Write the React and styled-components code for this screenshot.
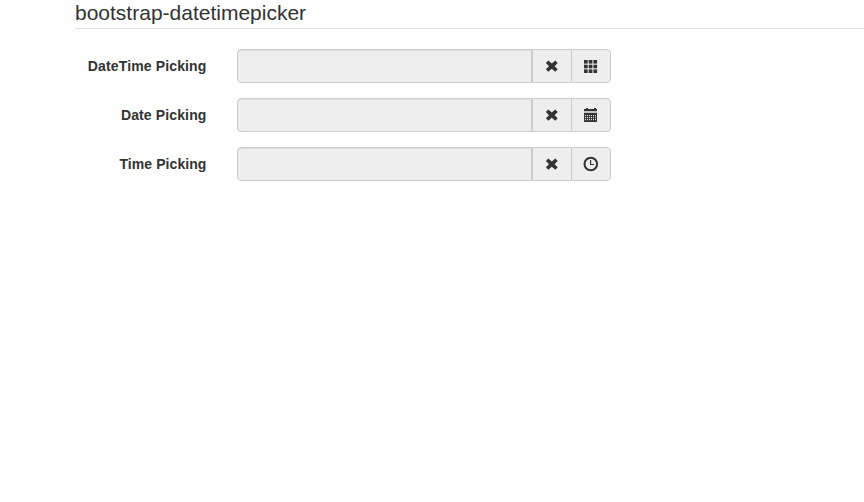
import React from "react";
import styled, { createGlobalStyle } from "styled-components";

const GlobalStyle = createGlobalStyle`
  *, *::before, *::after { box-sizing: border-box; }
  body {
    margin: 0;
    overflow: hidden;
    background: #fefefe;
    color: #333;
    font: 14px/20px "Liberation Sans", Arial, sans-serif;
  }
`;

const Form = styled.form`
  height: 502px;
  padding-left: 75px;
`;

const Legend = styled.h1`
  height: 29px;
  margin: 0 0 20px;
  padding-top: 2px;
  border-bottom: 1px solid #e2e2e2;
  font-size: 21px;
  line-height: 22px;
  font-weight: 400;
  white-space: nowrap;
`;

const FormGroup = styled.div`
  display: flex;
  gap: 30px;
  height: 34px;
  margin-bottom: 15px;
`;

const Label = styled.label`
  width: 132px;
  padding: 7px 0.5px 0 0;
  font-weight: 700;
  text-align: right;
  white-space: nowrap;
  letter-spacing: ${(p) => p.$tracking}px;
`;

const InputGroup = styled.div`
  display: flex;
  width: 374px;
`;

const Input = styled.input`
  flex: 1;
  min-width: 0;
  padding: 6px 12px;
  border: 1px solid #ccc;
  border-radius: 4px 0 0 4px;
  outline: none;
  background: #eee;
  box-shadow: inset 0 1px 1px rgba(0, 0, 0, 0.075);
  font: inherit;
`;

const Addon = styled.span`
  display: flex;
  align-items: center;
  justify-content: center;
  width: ${(p) => (p.$last ? 40 : 39)}px;
  border: 1px solid #ccc;
  border-right-width: ${(p) => (p.$last ? 1 : 0)}px;
  border-radius: ${(p) => (p.$last ? "0 4px 4px 0" : "0")};
  background: #eee;
  cursor: pointer;
`;

const Glyph = styled.svg`
  display: block;
  width: 16px;
  height: 16px;
  fill: #333;
`;

const RemoveIcon = () => (
  <Glyph viewBox="0 0 16 16">
    <path d="M4.3 2.5 7.8 5.6l3.5-3.1 2.4 2.5-3.1 3.2 3.1 3.1-2.4 2.5-3.5-3.1-3.5 3.1-2.4-2.5L5 8.2 1.9 5z" />
  </Glyph>
);

const GridIcon = () => (
  <Glyph viewBox="0 0 16 16">
    {[2, 6.7, 11.4].map((y) =>
      [1, 5.7, 10.4].map((x) => <rect key={`${x}-${y}`} x={x} y={y} width="3.7" height="3.6" />)
    )}
  </Glyph>
);

const CalendarIcon = () => (
  <Glyph viewBox="0 0 16 16">
    <path d="M1 2h2V1h2v1h6V1h2v1h1v2H1z" />
    <path d="M1 4h13v2H1z" fill="#c4c4c4" />
    <path d="M1 6h13v9H1z" />
    {[8, 10, 12].map((y) =>
      [2, 4, 6, 8, 10, 12].map((x) => (
        <rect key={`${x}-${y}`} x={x} y={y} width="1" height="1.2" fill="#ddd" />
      ))
    )}
  </Glyph>
);

const ClockIcon = () => (
  <Glyph viewBox="0 0 16 16">
    <circle cx="7.8" cy="8" r="6.3" fill="none" stroke="#333" strokeWidth="2" />
    <path d="M7 4h1.2v4H11v1H7z" />
  </Glyph>
);

const FIELDS = [
  { id: "datetime", label: "DateTime Picking", tracking: 0.14, Icon: GridIcon },
  { id: "date", label: "Date Picking", tracking: 0.13, Icon: CalendarIcon },
  { id: "time", label: "Time Picking", tracking: 0.08, Icon: ClockIcon },
];

export default function App() {
  return (
    <>
      <GlobalStyle />
      <Form>
        <Legend>bootstrap-datetimepicker</Legend>
        {FIELDS.map(({ id, label, tracking, Icon }) => (
          <FormGroup key={id}>
            <Label htmlFor={id} $tracking={tracking}>{label}</Label>
            <InputGroup>
              <Input id={id} readOnly />
              <Addon><RemoveIcon /></Addon>
              <Addon $last><Icon /></Addon>
            </InputGroup>
          </FormGroup>
        ))}
      </Form>
    </>
  );
}
